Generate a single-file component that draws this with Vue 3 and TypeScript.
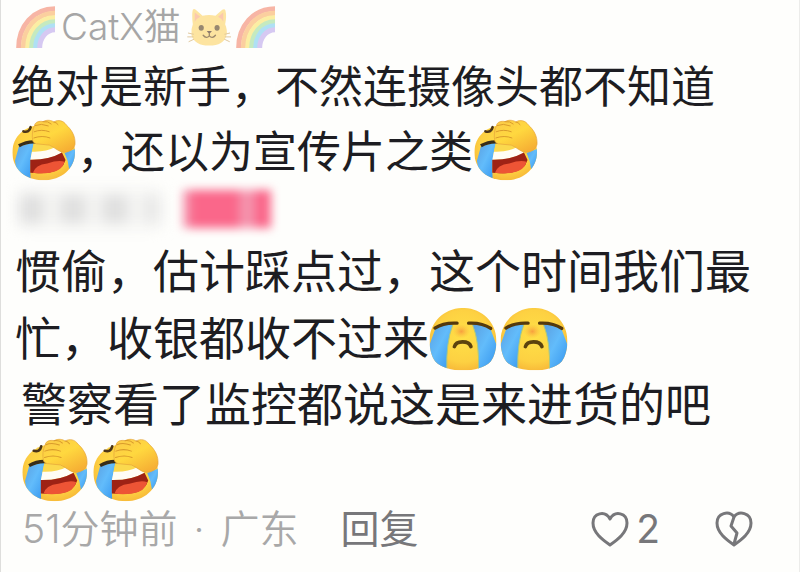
<script setup lang="ts">
import { ref } from 'vue'

const liked = ref(false)
const likes = ref(2)

function toggleLike(): void {
  liked.value = !liked.value
  likes.value += liked.value ? 1 : -1
}
</script>

<template>
  <main class="thread">
    <svg class="sprite" aria-hidden="true">
      <defs>
        <radialGradient id="face" cx="50%" cy="45%" r="62%">
          <stop offset="0" stop-color="#ffe047" />
          <stop offset="0.65" stop-color="#fdd142" />
          <stop offset="1" stop-color="#f5ae34" />
        </radialGradient>
        <linearGradient id="hand" x1="0" y1="0" x2="0.7" y2="1">
          <stop offset="0" stop-color="#fbc94a" />
          <stop offset="0.5" stop-color="#ffd83f" />
          <stop offset="1" stop-color="#f6b034" />
        </linearGradient>
        <linearGradient id="tear" x1="0" y1="0" x2="1" y2="1">
          <stop offset="0" stop-color="#5b9fe0" />
          <stop offset="0.45" stop-color="#62bcfb" />
          <stop offset="1" stop-color="#3192ed" />
        </linearGradient>
        <radialGradient id="nose">
          <stop offset="0" stop-color="#f58b3c" stop-opacity="0.75" />
          <stop offset="1" stop-color="#f9b23c" stop-opacity="0" />
        </radialGradient>
        <clipPath id="laugh-clip">
          <path d="M38 124C38 76 78 40 132 40C188 40 230 76 230 124C230 174 188 210 134 210C76 210 38 174 38 124Z" />
        </clipPath>
        <clipPath id="cry-clip">
          <path d="M138 24C194 24 238 66 239 120C240 144 234 170 222 186C204 205 172 213 138 213C104 213 72 205 54 186C42 170 36 144 37 120C38 66 82 24 138 24Z" />
        </clipPath>
        <symbol id="laugh" viewBox="36 22 198 190">
          <g clip-path="url(#laugh-clip)">
            <rect x="36" y="22" width="198" height="190" fill="url(#face)" />
            <path d="M58 106L104 93Q90 145 94 212H56L46 150Z" fill="url(#tear)" />
            <path d="M198 126L234 112V160L212 176Q210 150 198 126Z" fill="url(#tear)" />
            <path d="M104 94L190 112L176 124L96 138Z" fill="#fbd94e" />
            <path d="M98 122Q140 124 170 108L190 126Q150 148 93 147Z" fill="#fffdf5" />
            <path d="M93 147Q150 148 190 125L201 148Q192 180 152 186Q120 190 93 187Z" fill="#9e2215" />
            <path d="M101 187Q108 162 145 158Q180 146 198 153Q192 180 154 187Q124 191 101 187Z" fill="#ed5435" />
          </g>
          <path d="M72 60Q90 65 94 47" fill="none" stroke="#4b3518" stroke-width="8" stroke-linecap="round" />
          <path d="M58 104Q82 90 110 92" fill="none" stroke="#382d19" stroke-width="10" />
          <path d="M101 90C97 75 99 54 106 42C107 31 122 27 132 30C145 23 158 26 165 31C179 23 195 27 203 40C220 55 232 75 230 100C226 116 212 123 195 124C177 122 166 107 151 102L112 98Q104 97 101 90Z" fill="url(#hand)" stroke="#e3a23a" stroke-width="2" />
          <path d="M108 42Q126 34 148 43M105 61Q128 52 151 61M104 80Q130 71 153 80M132 30Q148 28 157 37M165 31Q173 32 178 39" fill="none" stroke="#d99b2c" stroke-width="3" stroke-linecap="round" />
        </symbol>
        <symbol id="cry" viewBox="35 22 206 192">
          <g clip-path="url(#cry-clip)">
            <rect x="35" y="22" width="206" height="194" fill="url(#face)" />
            <path d="M56 82Q78 70 107 75Q86 130 89 214H35V140Z" fill="url(#tear)" />
            <path d="M167 75Q196 70 219 82L241 140V214H185Q188 126 167 75Z" fill="url(#tear)" />
            <path d="M107 75Q86 130 89 214M167 75Q188 126 185 214" fill="none" stroke="#a8c783" stroke-width="3" />
            <ellipse cx="133" cy="95" rx="26" ry="22" fill="url(#nose)" />
          </g>
          <path d="M53 85Q78 68 120 70M155 70Q196 68 222 86" fill="none" stroke="#54390d" stroke-width="10" stroke-linecap="round" />
          <path d="M112 141C117 122 156 122 162 141" fill="none" stroke="#5c420e" stroke-width="11" stroke-linecap="round" />
        </symbol>
        <symbol id="rainbow" viewBox="0 0 117 126">
          <g fill="none" stroke-width="15">
            <path d="M8 126C8 60 52 8 117 8" stroke="#f7b5a5" />
            <path d="M22 126C22 68 60 22 117 22" stroke="#fbcf9f" />
            <path d="M35 126C35 76 68 35 117 35" stroke="#fbeea3" />
            <path d="M47 126C47 84 75 47 117 47" stroke="#c5eac0" />
            <path d="M59 126C59 90 82 59 117 59" stroke="#afe0f4" />
            <path d="M71 126C71 97 90 71 117 71" stroke="#d6c9f2" />
          </g>
        </symbol>
        <symbol id="cat" viewBox="0 0 136 120">
          <path d="M18 50Q14 18 18 5Q21 0 27 5L48 24Q68 18 88 24L109 5Q117 1 119 8Q123 24 118 50Q126 70 122 84Q114 116 68 116Q24 116 14 84Q12 64 18 50Z" fill="#fde4a0" />
          <path d="M24 14L41 27Q30 32 24 42ZM112 14L96 27Q107 32 112 42Z" fill="#fbc8ae" />
          <ellipse cx="44" cy="61" rx="8" ry="9" fill="#978770" />
          <ellipse cx="93" cy="61" rx="8" ry="9" fill="#978770" />
          <path d="M61 71H77L69 80Z" fill="#8c796c" />
          <path d="M69 79V86Q60 96 50 84M69 86Q78 96 88 84" fill="none" stroke="#9d896d" stroke-width="4" stroke-linecap="round" />
          <path d="M3 77L21 81M1 89H20M5 104L22 96M116 81L133 77M117 89H136M115 96L132 104" stroke="#dfc69c" stroke-width="3" />
        </symbol>
      </defs>
    </svg>

    <header class="author">
      <svg class="rainbow" role="img" aria-label="🌈"><use href="#rainbow" /></svg>
      <span class="name">CatX猫</span>
      <svg class="cat" role="img" aria-label="🐱"><use href="#cat" /></svg>
      <svg class="rainbow" role="img" aria-label="🌈"><use href="#rainbow" /></svg>
    </header>

    <p class="comment first">绝对是新手，不然连摄像头都不知道<svg class="emoji small" role="img" aria-label="笑哭"><use href="#laugh" /></svg>，还以为宣传片之类<svg class="emoji small" role="img" aria-label="笑哭"><use href="#laugh" /></svg></p>

    <div class="masked" aria-hidden="true">
      <span class="smudges"><i></i><i></i><i></i><i class="faint"></i></span>
      <span class="badge"><i></i><i></i></span>
    </div>

    <p class="comment second">惯偷，估计踩点过，这个时间我们最忙，收银都收不过来<svg class="emoji" role="img" aria-label="大哭"><use href="#cry" /></svg><svg class="emoji" role="img" aria-label="大哭"><use href="#cry" /></svg></p>

    <p class="comment third">警察看了监控都说这是来进货的吧<svg class="emoji" role="img" aria-label="笑哭"><use href="#laugh" /></svg><svg class="emoji" role="img" aria-label="笑哭"><use href="#laugh" /></svg></p>

    <footer class="meta">
      <span class="when">51分钟前<span class="dot"> · </span>广东</span>
      <button class="reply" type="button">回复</button>
      <button class="action like" type="button" aria-label="赞" :aria-pressed="liked" @click="toggleLike">
        <svg class="heart" viewBox="0 0 38 36">
          <path d="M19 34C12 29 2 22 2 12C2 2 14 -1 19 8C24 -1 36 2 36 12C36 22 26 29 19 34Z" />
        </svg>
        <span>{{ likes }}</span>
      </button>
      <button class="action" type="button" aria-label="踩">
        <svg class="heart" viewBox="0 0 38 36">
          <path d="M19 34C12 29 2 22 2 12C2 2 14 -1 19 6C24 -1 36 2 36 12C36 22 26 29 19 34Z" />
          <path d="M19 6L16 15L22 22L19 33" />
        </svg>
      </button>
    </footer>
  </main>
</template>

<style>
body {
  margin: 0;
  background: #fefefc;
}
</style>

<style scoped>
.thread {
  box-sizing: border-box;
  min-height: 100vh;
  border-left: 1px solid #dededc;
  border-right: 1px solid #ececea;
  background: #fefefc;
  color: #1d1d22;
  font-family: Inter, "Noto Sans CJK SC", sans-serif;
}

.sprite {
  position: absolute;
  width: 0;
  height: 0;
}

.author {
  display: flex;
  align-items: center;
  height: 50px;
  padding: 2px 0 0 15px;
}

.name {
  margin: 0 6px;
  color: #a6a6a6;
  font-size: 37px;
  font-weight: 350;
  line-height: 50px;
}

.rainbow {
  width: 39px;
  height: 42px;
}

.cat {
  width: 44px;
  height: 39px;
  margin-right: 5px;
}

.comment {
  margin: 0;
  padding-right: 30px;
  font-family: "Noto Sans CJK SC", sans-serif;
  font-size: 46px;
}

.first {
  padding-left: 10px;
  font-size: 44px;
  line-height: 65px;
}

.second {
  padding-left: 14px;
  line-height: 67px;
}

.third {
  padding-left: 20px;
  line-height: 65px;
}

.emoji {
  width: 68px;
  height: 64px;
  margin: -10px 3px -10px 0;
  vertical-align: -6px;
}

.emoji.small {
  width: 66px;
  height: 62px;
  margin-right: 0;
  vertical-align: -3px;
}

.masked {
  display: flex;
  align-items: center;
  gap: 22px;
  height: 53px;
  padding-left: 18px;
}

.smudges {
  display: flex;
  gap: 18px;
  padding: 6px 0;
  background: #f5f5f3;
  filter: blur(7px);
}

.smudges i {
  width: 24px;
  height: 28px;
  background: #dfdfdf;
}

.smudges .faint {
  width: 16px;
  background: #e8e8e7;
}

.badge {
  display: flex;
  justify-content: flex-end;
  gap: 16px;
  width: 88px;
  height: 38px;
  background: #f592ac;
  filter: blur(5px);
}

.badge i {
  width: 16px;
  background: #fa678a;
}

.badge i:first-child {
  width: 48px;
}

.meta {
  display: flex;
  align-items: center;
  height: 60px;
  padding: 0 46px 0 21px;
  font-size: 39px;
  line-height: 60px;
}

.when {
  color: #a8a8a8;
  font-weight: 350;
  white-space: nowrap;
}

.dot {
  margin: 0 5px;
}

button {
  padding: 0;
  border: 0;
  background: none;
  color: #77777a;
  font: inherit;
  cursor: pointer;
}

.reply {
  margin-left: 42px;
  white-space: nowrap;
}

.action {
  display: flex;
  align-items: center;
  gap: 7px;
}

.like {
  margin-left: auto;
  margin-right: 55px;
}

.heart {
  width: 38px;
  height: 36px;
  fill: none;
  stroke: #77777a;
  stroke-width: 3;
  stroke-linejoin: round;
}
</style>
